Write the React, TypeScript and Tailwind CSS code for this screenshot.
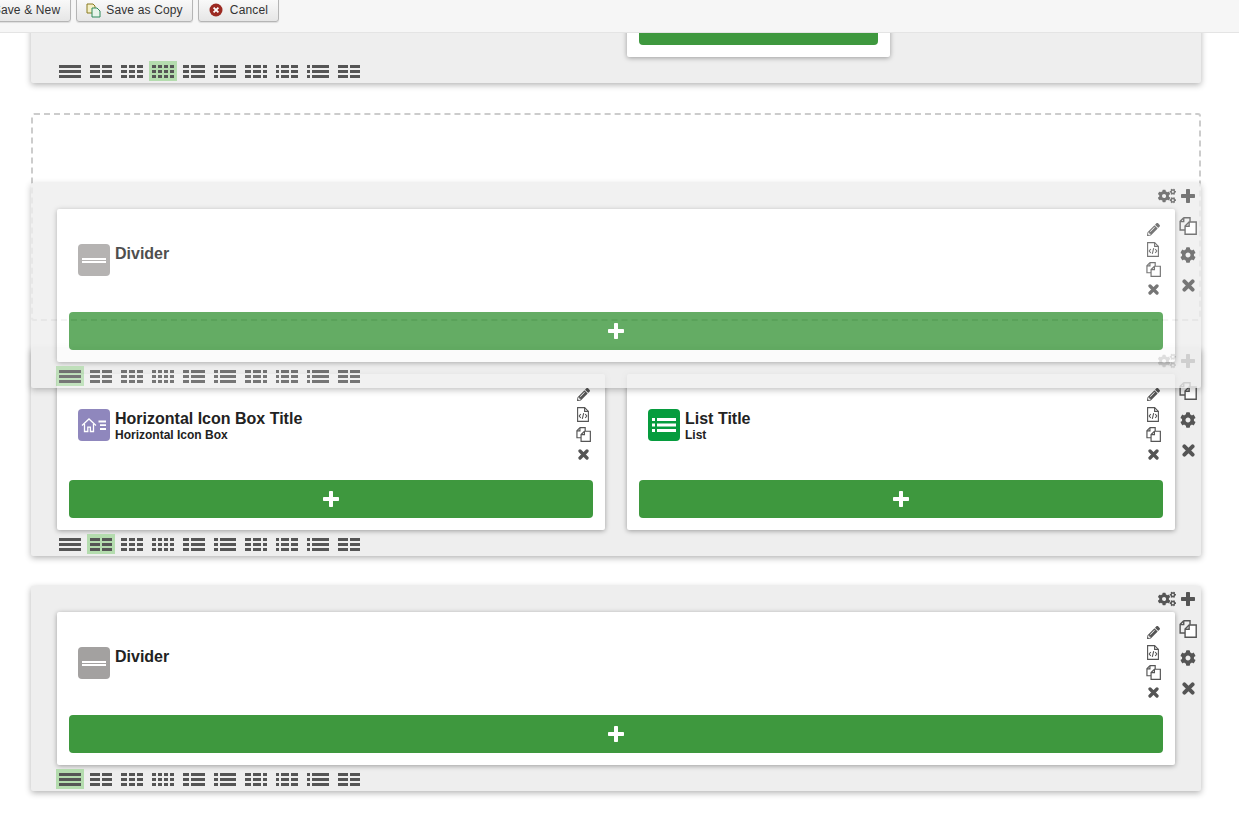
import React from "react";
import { FaCogs, FaCog, FaPencilAlt } from "react-icons/fa";

const layouts: number[][] = [
  [22],
  [10, 10],
  [6, 6, 6],
  [4, 4, 4, 4],
  [6, 14],
  [4, 16],
  [6, 8, 4],
  [3, 8, 7],
  [3, 17],
  [10, 10],
];

function ColIcon({ cols }: { cols: number[] }) {
  const rects: React.ReactNode[] = [];
  [0, 5, 10].forEach((y) => {
    let x = 0;
    cols.forEach((w, i) => {
      rects.push(<rect key={`${y}-${i}`} x={x} y={y} width={w} height={3} />);
      x += w + 2;
    });
  });
  return (
    <svg width="22" height="13" viewBox="0 0 22 13" fill="currentColor">
      {rects}
    </svg>
  );
}

function Selector({ active }: { active: number }) {
  return (
    <div className="flex h-[26px] items-center pl-[25px] pt-[2px]">
      {layouts.map((c, i) => (
        <div
          key={i}
          className={
            i === active
              ? "flex h-[20px] w-[28px] mr-[3px] items-center justify-center bg-[#b4dcae] text-[#555]"
              : "flex h-[20px] w-[28px] mr-[3px] items-center justify-center text-[#555]"
          }
        >
          <ColIcon cols={c} />
        </div>
      ))}
    </div>
  );
}

function PlusIcon({ size, bar }: { size: number; bar: number }) {
  const o = (size - bar) / 2;
  return (
    <svg width={size} height={size} viewBox={`0 0 ${size} ${size}`} fill="currentColor">
      <rect x={o} y="0" width={bar} height={size} rx="0.7" />
      <rect x="0" y={o} width={size} height={bar} rx="0.7" />
    </svg>
  );
}

function CrossIcon({ size }: { size: number }) {
  return (
    <svg width={size} height={size} viewBox="0 0 12 12" stroke="currentColor" strokeWidth="3.6" strokeLinecap="round">
      <path d="M2.2 2.2l7.6 7.6M9.8 2.2l-7.6 7.6" />
    </svg>
  );
}

function CopyIcon({ size = 15 }: { size?: number }) {
  return (
    <svg width={size} height={size} viewBox="0 0 16 16" fill="none" stroke="currentColor" strokeWidth="1.25">
      <path d="M4.2.7h5.6v3.6M4.2.7 1 3.9v7.6h4.4" />
      <path d="M1 4.1h3.2V.7" />
      <path d="M9 4.5h6.3v10.8H5.4V8z" fill="#fff" />
      <path d="M5.4 8.2H9V4.5" />
    </svg>
  );
}

function CodeIcon() {
  return (
    <svg width="12" height="15" viewBox="0 0 12 15" fill="none" stroke="currentColor" strokeWidth="1.1">
      <path d="M.6.6h7l3.8 3.8v10H.6z" />
      <path d="M7.6.6v3.8h3.8" />
      <path d="M3.8 7 2.2 9l1.6 2M8.2 7l1.6 2-1.6 2M6.7 6.2 5.3 11.8" />
    </svg>
  );
}

function Tile({ kind }: { kind: "divider" | "house" | "list" }) {
  if (kind === "divider") {
    return (
      <div className="flex h-[32px] w-[32px] shrink-0 flex-col items-center justify-center gap-[1px] rounded-[4px] bg-[#a3a1a0]">
        <div className="h-[2px] w-[24px] bg-white" />
        <div className="h-[2px] w-[24px] bg-white" />
      </div>
    );
  }
  if (kind === "house") {
    return (
      <div className="flex h-[32px] w-[32px] shrink-0 items-center justify-center rounded-[4px] bg-[#8f87bd]">
        <svg width="26" height="16" viewBox="0 0 26 16" fill="none" stroke="#fff" strokeWidth="1.3">
          <path d="M1 8.5 8 2l7 6.5" />
          <path d="M3.5 7v7.5h3.3v-4.3h2.6v4.3h3.1V7" />
          <path d="M17.5 4.5H25M19 8.2h6M19 12h6" strokeWidth="1.8" />
        </svg>
      </div>
    );
  }
  return (
    <div className="flex h-[32px] w-[32px] shrink-0 items-center justify-center rounded-[4px] bg-[#069c3e]">
      <svg width="24" height="16" viewBox="0 0 24 16" fill="#fff">
        <rect x="0" y="1" width="3" height="3" />
        <rect x="5" y="1" width="19" height="3" />
        <rect x="0" y="6.5" width="3" height="3" />
        <rect x="5" y="6.5" width="19" height="3" />
        <rect x="0" y="12" width="3" height="3" />
        <rect x="5" y="12" width="19" height="3" />
      </svg>
    </div>
  );
}

function Card({ title, sub, kind, noPlus }: { title: string; sub?: string; kind: "divider" | "house" | "list"; noPlus?: boolean }) {
  return (
    <div className="flex min-w-0 flex-1 flex-col rounded-[2px] bg-white px-[12px] pb-[12px] shadow-[0_1px_5px_rgba(0,0,0,0.35)]">
      <div className={sub ? "flex h-[106px] items-start justify-between" : "flex h-[103px] items-start justify-between"}>
        <div className="flex items-start gap-[5px] pl-[9px] pt-[35px]">
          <Tile kind={kind} />
          <div className="pt-[1px] text-[#222]">
            <div className="text-[16px] font-bold leading-[18px]">{title}</div>
            {sub && <div className="text-[12px] font-bold leading-[14px]">{sub}</div>}
          </div>
        </div>
        <div className="mr-[2px] flex w-[16px] flex-col items-center pt-[10px] text-[#555]">
          <div className="flex h-[20px] items-center"><FaPencilAlt size={13} /></div>
          <div className="flex h-[20px] items-center"><CodeIcon /></div>
          <div className="flex h-[20px] items-center"><CopyIcon /></div>
          <div className="flex h-[20px] items-center"><CrossIcon size={11} /></div>
        </div>
      </div>
      <div className="flex h-[38px] items-center justify-center rounded-[4px] bg-[#3e983e] text-white">
        {!noPlus && <PlusIcon size={16} bar={4} />}
      </div>
    </div>
  );
}

function Row({ children, active, className = "" }: { children: React.ReactNode; active: number; className?: string }) {
  return (
    <div className={`w-[1170px] rounded-[2px] bg-[#eeeeee] shadow-[0_2px_6px_rgba(0,0,0,0.3)] ${className}`}>
      <div className="flex h-[26px] items-center justify-end pr-[6px] text-[#555]">
        <FaCogs size={18} className="mr-[5px]" />
        <PlusIcon size={14} bar={4} />
      </div>
      <div className="flex">
        <div className="flex w-[26px] shrink-0" />
        <div className="flex min-w-0 flex-1 gap-[22px]">{children}</div>
        <div className="flex w-[26px] shrink-0 flex-col items-center pt-[8px] text-[#555]">
          <div className="flex h-[18px] items-center"><CopyIcon size={18} /></div>
          <div className="mt-[11px] flex h-[18px] items-center"><FaCog size={16} /></div>
          <div className="mt-[12px] flex h-[18px] items-center"><CrossIcon size={13} /></div>
        </div>
      </div>
      <Selector active={active} />
    </div>
  );
}

function ToolButton({ icon, label, className = "" }: { icon?: React.ReactNode; label: string; className?: string }) {
  return (
    <div
      className={`flex h-[30px] items-center gap-[5px] rounded-[3px] border border-[#b5b5b5] bg-gradient-to-b from-white to-[#e6e6e6] pt-[6px] text-[12px] tracking-[0.15px] text-[#333] shadow-[0_1px_1px_rgba(0,0,0,0.1)] ${className}`}
    >
      {icon}
      <span>{label}</span>
    </div>
  );
}

export default function App() {
  return (
    <div className="relative h-[813px] w-[1239px] overflow-hidden bg-white font-['Liberation_Sans',Arial,sans-serif]">
      <div className="relative z-20 flex h-[33px] items-start gap-[5px] border-b border-[#e4e4e4] bg-[#f6f6f6]">
        <div className="-mt-[8px] flex gap-[5px]">
          <ToolButton label="Save & New" className="-ml-[24px] w-[95px] justify-center pl-[6px]" />
          <ToolButton
            className="w-[117px] justify-center"
            label="Save as Copy"
            icon={
              <svg width="15" height="15" viewBox="0 0 15 15" fill="none">
                <path d="M1 1h6l2 2v7H1z" fill="#f4f0c8" stroke="#8a7a20" />
                <path d="M6 5h5l3 3v6H6z" fill="#e8f4ea" stroke="#2e8a5a" />
              </svg>
            }
          />
          <ToolButton
            className="w-[81px] justify-center gap-[7px]"
            label="Cancel"
            icon={
              <svg width="14" height="14" viewBox="0 0 14 14">
                <circle cx="7" cy="7" r="6.5" fill="#9c2a22" />
                <path d="M4.6 4.6l4.8 4.8M9.4 4.6l-4.8 4.8" stroke="#fff" strokeWidth="1.8" />
              </svg>
            }
          />
        </div>
      </div>

      <div className="flex flex-col pl-[31px]">
        <Row active={3} className="-mt-[155px]">
          <div className="grid flex-1 grid-cols-4 gap-[22px]">
            <div className="col-start-3 flex">
              <Card title="" kind="divider" noPlus />
            </div>
          </div>
        </Row>
        <div className="mt-[30px] h-[208px] w-[1170px] rounded-[3px] border-2 border-dashed border-[#cccccc]" />
        <Row active={1} className="mt-[27px]">
          <Card title="Horizontal Icon Box Title" sub="Horizontal Icon Box" kind="house" />
          <Card title="List Title" sub="List" kind="list" />
        </Row>
        <Row active={0} className="mt-[30px]">
          <Card title="Divider" kind="divider" />
        </Row>
      </div>

      <div className="absolute left-[31px] top-[183px] z-10 opacity-80">
        <Row active={0}>
          <Card title="Divider" kind="divider" />
        </Row>
      </div>
    </div>
  );
}
